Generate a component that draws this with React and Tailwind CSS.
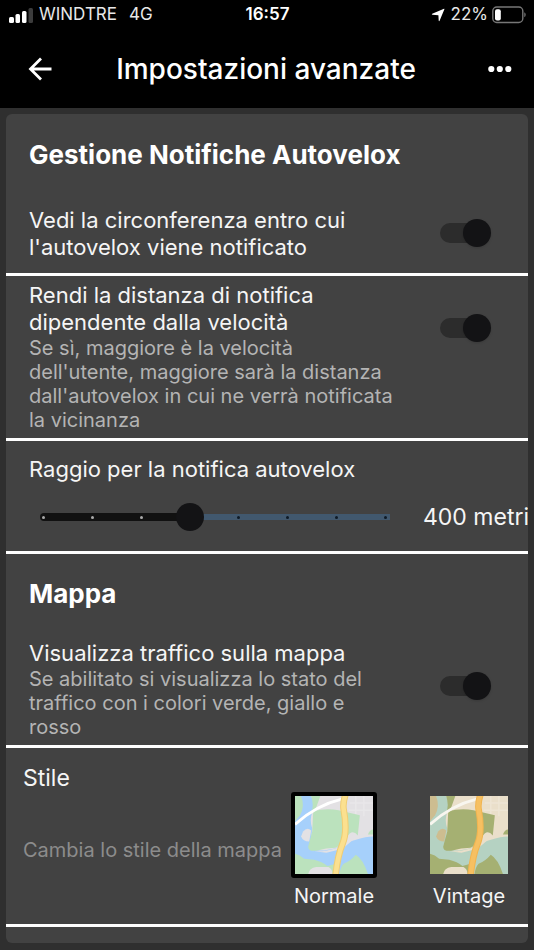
import React, { useState } from 'react';

const STEPS = [0, 1, 2, 3, 4, 5, 6, 7];

const StatusBar = () => (
  <div className="flex h-[30px] items-center justify-between pl-[9px] pr-2 text-[17px] text-[#e8e8e8]">
    <div className="flex flex-1 items-center">
      <svg width="24" height="15" viewBox="0 0 24 15" fill="#fff" aria-hidden="true">
        <rect x="0" y="9" width="5" height="6" rx="1.5" />
        <rect x="6.5" y="6" width="4.5" height="9" rx="1.5" />
        <rect x="13" y="3" width="4.5" height="12" rx="1.5" />
        <rect x="19.5" y="0" width="4.5" height="15" rx="1.5" fill="#3c3c3c" />
      </svg>
      <span className="ml-1.5">WINDTRE</span>
      <span className="ml-3">4G</span>
    </div>
    <span className="font-semibold text-white">16:57</span>
    <div className="flex flex-1 items-center justify-end">
      <svg width="14" height="14" viewBox="0 0 14 14" fill="#fff" aria-hidden="true">
        <path d="M13 .8Q13.6.6 13.4 1.3L8.6 12.8Q8 13.8 7.7 12.6L7.4 7.2 1.4 6.7Q.2 6.4 1.2 5.8z" />
      </svg>
      <span className="ml-1.5">22%</span>
      <svg className="ml-1" width="34" height="18" viewBox="0 0 34 18" aria-hidden="true">
        <rect x="0.8" y="1" width="30" height="15.5" rx="4" fill="none" stroke="#777" strokeWidth="1.4" />
        <rect x="3" y="3.2" width="5.8" height="11.2" rx="2" fill="#fff" />
        <path d="M32.3 6.3q1.4.9 1.4 2.5t-1.4 2.5z" fill="#777" />
      </svg>
    </div>
  </div>
);

const Header = () => (
  <header className="flex h-[78px] items-center gap-4 pl-7 pr-[22px] text-white">
    <button type="button" aria-label="Indietro" className="flex w-6 shrink-0 justify-center">
      <svg width="24" height="24" viewBox="0 0 24 24" fill="none" stroke="currentColor" strokeWidth="2.8" aria-hidden="true">
        <path d="M23.5 12H3M13 1.5 2.5 12 13 22.5" />
      </svg>
    </button>
    <h1 className="flex-1 pr-2 text-center text-[28px] font-medium leading-8">Impostazioni avanzate</h1>
    <button type="button" aria-label="Altro" className="flex w-6 shrink-0 justify-center">
      <svg width="24" height="8" viewBox="0 0 24 8" fill="currentColor" aria-hidden="true">
        <circle cx="3.3" cy="4" r="3.1" />
        <circle cx="11.8" cy="4" r="3.1" />
        <circle cx="20.3" cy="4" r="3.1" />
      </svg>
    </button>
  </header>
);

const SwitchRow = ({ id, title, subtitle, className }) => {
  const [checked, setChecked] = useState(true);

  return (
    <div className={`flex items-start justify-between border-b-[3px] border-white pl-[23px] pr-[37px] ${className}`}>
      <label htmlFor={id} className="w-[364px]">
        <span className="block text-[22px] leading-[27px] text-[#f5f5f5]">{title}</span>
        {subtitle && <span className="block text-[20px] leading-6 text-[#b4b4b4]">{subtitle}</span>}
      </label>
      <input
        id={id}
        type="checkbox"
        role="switch"
        checked={checked}
        onChange={(e) => setChecked(e.target.checked)}
        className={`relative h-7 w-[51px] shrink-0 appearance-none before:absolute before:left-0 before:top-1 before:h-5 before:w-12 before:rounded-full before:bg-[#2c2c2c] after:absolute after:left-0 after:top-0 after:size-7 after:rounded-full after:bg-[#131315] after:shadow-sm checked:after:left-[23px] ${
          subtitle ? 'mt-8' : 'mt-3'
        }`}
      />
    </div>
  );
};

const RadiusSlider = () => {
  const [step, setStep] = useState(3);

  return (
    <div className="border-b-[3px] border-white pb-5 pl-[23px] pt-[15px]">
      <label htmlFor="raggio" className="block text-[22px] leading-[27px] text-[#f5f5f5]">
        Raggio per la notifica autovelox
      </label>
      <div className="mt-5 flex items-center">
        <div className="relative h-7 w-[371px] shrink-0">
          <div className="absolute left-3 right-[10px] top-[11px] h-1.5 bg-[#41586e]" />
          <div
            className="absolute left-[11px] top-[10px] h-2 rounded-full bg-[#111]"
            style={{ width: `${3 + step * 49}px` }}
          />
          <div className="absolute inset-x-[13px] top-[13px] flex justify-between">
            {STEPS.map((s) => (
              <span key={s} className={`size-[3px] rounded-full ${s < step ? 'bg-[#aaa]' : 'bg-[#0e1a26]'}`} />
            ))}
          </div>
          <input
            id="raggio"
            type="range"
            min="0"
            max="7"
            value={step}
            onChange={(e) => setStep(Number(e.target.value))}
            className="absolute inset-0 h-7 w-full appearance-none bg-transparent [&::-webkit-slider-thumb]:size-7 [&::-webkit-slider-thumb]:appearance-none [&::-webkit-slider-thumb]:rounded-full [&::-webkit-slider-thumb]:bg-[#131315]"
          />
        </div>
        <output htmlFor="raggio" className="ml-[23px] whitespace-nowrap text-[23px] leading-7 text-[#f5f5f5]">
          {100 + step * 100} metri
        </output>
      </div>
    </div>
  );
};

const NORMAL = { land: '#e3e1e4', park: '#bbe2bd', coast: '#bbe2bd', water: '#a6d0fb', road: '#fbe08f', edge: '#f0cd74', street: '#fff' };
const VINTAGE = { land: '#eadfca', park: '#a5b072', coast: '#cdbd90', water: '#b5d2c2', road: '#f6c062', edge: '#f1b450', street: '#f8f6ef' };

const MapThumb = ({ colors }) => (
  <svg className="size-full" viewBox="0 0 77 77" aria-hidden="true">
    <rect width="77" height="77" fill={colors.land} />
    <path d="M54 7h23M53 14h24M60 0v18M68 0v20" stroke="#fff" strokeOpacity="0.2" strokeWidth="1.5" />
    <path d="M5 0h11q4 8 1 16-3 8 0 16l-2 20q10 4 26-1 12-6 20-8 9-3 16-3v37H0V24Q8 12 5 0z" fill={colors.water} />
    <path d="M0 0h6q4 10-1 19l-5 6z" fill={colors.coast} />
    <path d="M16 0h9l-4 11-5 6q3-8 0-17z" fill={colors.park} />
    <path d="M8 35q4-5 8-1l-2 11q-6 0-8-5z" fill={colors.coast === colors.park ? colors.land : colors.coast} />
    <path d="M15 54q12 2 27-3l7-7 6-6 6 2-14 12-16 4z" fill={colors.land} />
    <path d="M18 15q12-3 25-1l21 5-2 20q-4-5-8-2l-6 7q-3 5-8 7-9 0-19 3-8 1-8-4l4-15z" fill={colors.park} />
    <path d="M0 57q5 1 9 5l10 1q8 2 13 6l8-2v10H0z" fill={colors.park} />
    <path d="M44 77q1-7 4-10 7-3 12-9 7 4 12 19z" fill={colors.park} />
    <path d="M72 38q2-5 5-5v5z" fill={colors.park} />
    <path d="M13 77q1-6 8-7h12q4 2 4 7z" fill={colors.land} />
    <path d="M0 28Q21 9 46 3" fill="none" stroke={colors.street} strokeWidth="2.8" />
    <path d="M50-2q-3 9-2 15 4 22-1 34-5 12-7 32" fill="none" stroke={colors.edge} strokeWidth="6.5" />
    <path d="M50-2q-3 9-2 15 4 22-1 34-5 12-7 32" fill="none" stroke={colors.road} strokeWidth="4.5" />
  </svg>
);

const StylePicker = () => {
  const [selected, setSelected] = useState('Normale');
  const options = [
    { name: 'Normale', colors: NORMAL },
    { name: 'Vintage', colors: VINTAGE }
  ];

  return (
    <div className="border-b-[3px] border-white pb-4 pl-[17px] pr-4 pt-4">
      <h3 className="text-[23px] leading-7 text-[#f5f5f5]">Stile</h3>
      <div className="flex items-start justify-between">
        <p className="mt-[46px] whitespace-nowrap text-[20px] leading-6 text-[#8c8c8c]">Cambia lo stile della mappa</p>
        <div className="flex gap-[49px]">
          {options.map((option) => (
            <button
              key={option.name}
              type="button"
              aria-pressed={selected === option.name}
              onClick={() => setSelected(option.name)}
              className="flex w-[86px] flex-col items-center text-[20px] leading-6 text-[#f5f5f5]"
            >
              <span
                className={`mb-1.5 block size-[86px] rounded-[3px] border-4 ${
                  selected === option.name ? 'border-black' : 'border-transparent'
                }`}
              >
                <MapThumb colors={option.colors} />
              </span>
              {option.name}
            </button>
          ))}
        </div>
      </div>
    </div>
  );
};

const App = () => (
  <div className="min-h-screen bg-[#2f2f2f] font-['Inter','Liberation_Sans',sans-serif]">
    <div className="bg-black">
      <StatusBar />
      <Header />
    </div>

    <main className="p-1.5">
      <div className="overflow-hidden rounded-md bg-[#424242] pb-4">
        <h2 className="pb-[38px] pl-[23px] pt-[27px] text-[26px] font-bold leading-7 text-white">
          Gestione Notifiche Autovelox
        </h2>
        <SwitchRow
          id="circonferenza"
          className="pb-3"
          title="Vedi la circonferenza entro cui l'autovelox viene notificato"
        />
        <SwitchRow
          id="distanza"
          className="pb-1.5 pt-1.5"
          title="Rendi la distanza di notifica dipendente dalla velocità"
          subtitle="Se sì, maggiore è la velocità dell'utente, maggiore sarà la distanza dall'autovelox in cui ne verrà notificata la vicinanza"
        />
        <RadiusSlider />

        <h2 className="pb-8 pl-[23px] pt-[26px] text-[26px] font-bold leading-7 text-white">Mappa</h2>
        <SwitchRow
          id="traffico"
          className="pb-1.5"
          title="Visualizza traffico sulla mappa"
          subtitle="Se abilitato si visualizza lo stato del traffico con i colori verde, giallo e rosso"
        />
        <StylePicker />
      </div>
    </main>
  </div>
);

export default App;
